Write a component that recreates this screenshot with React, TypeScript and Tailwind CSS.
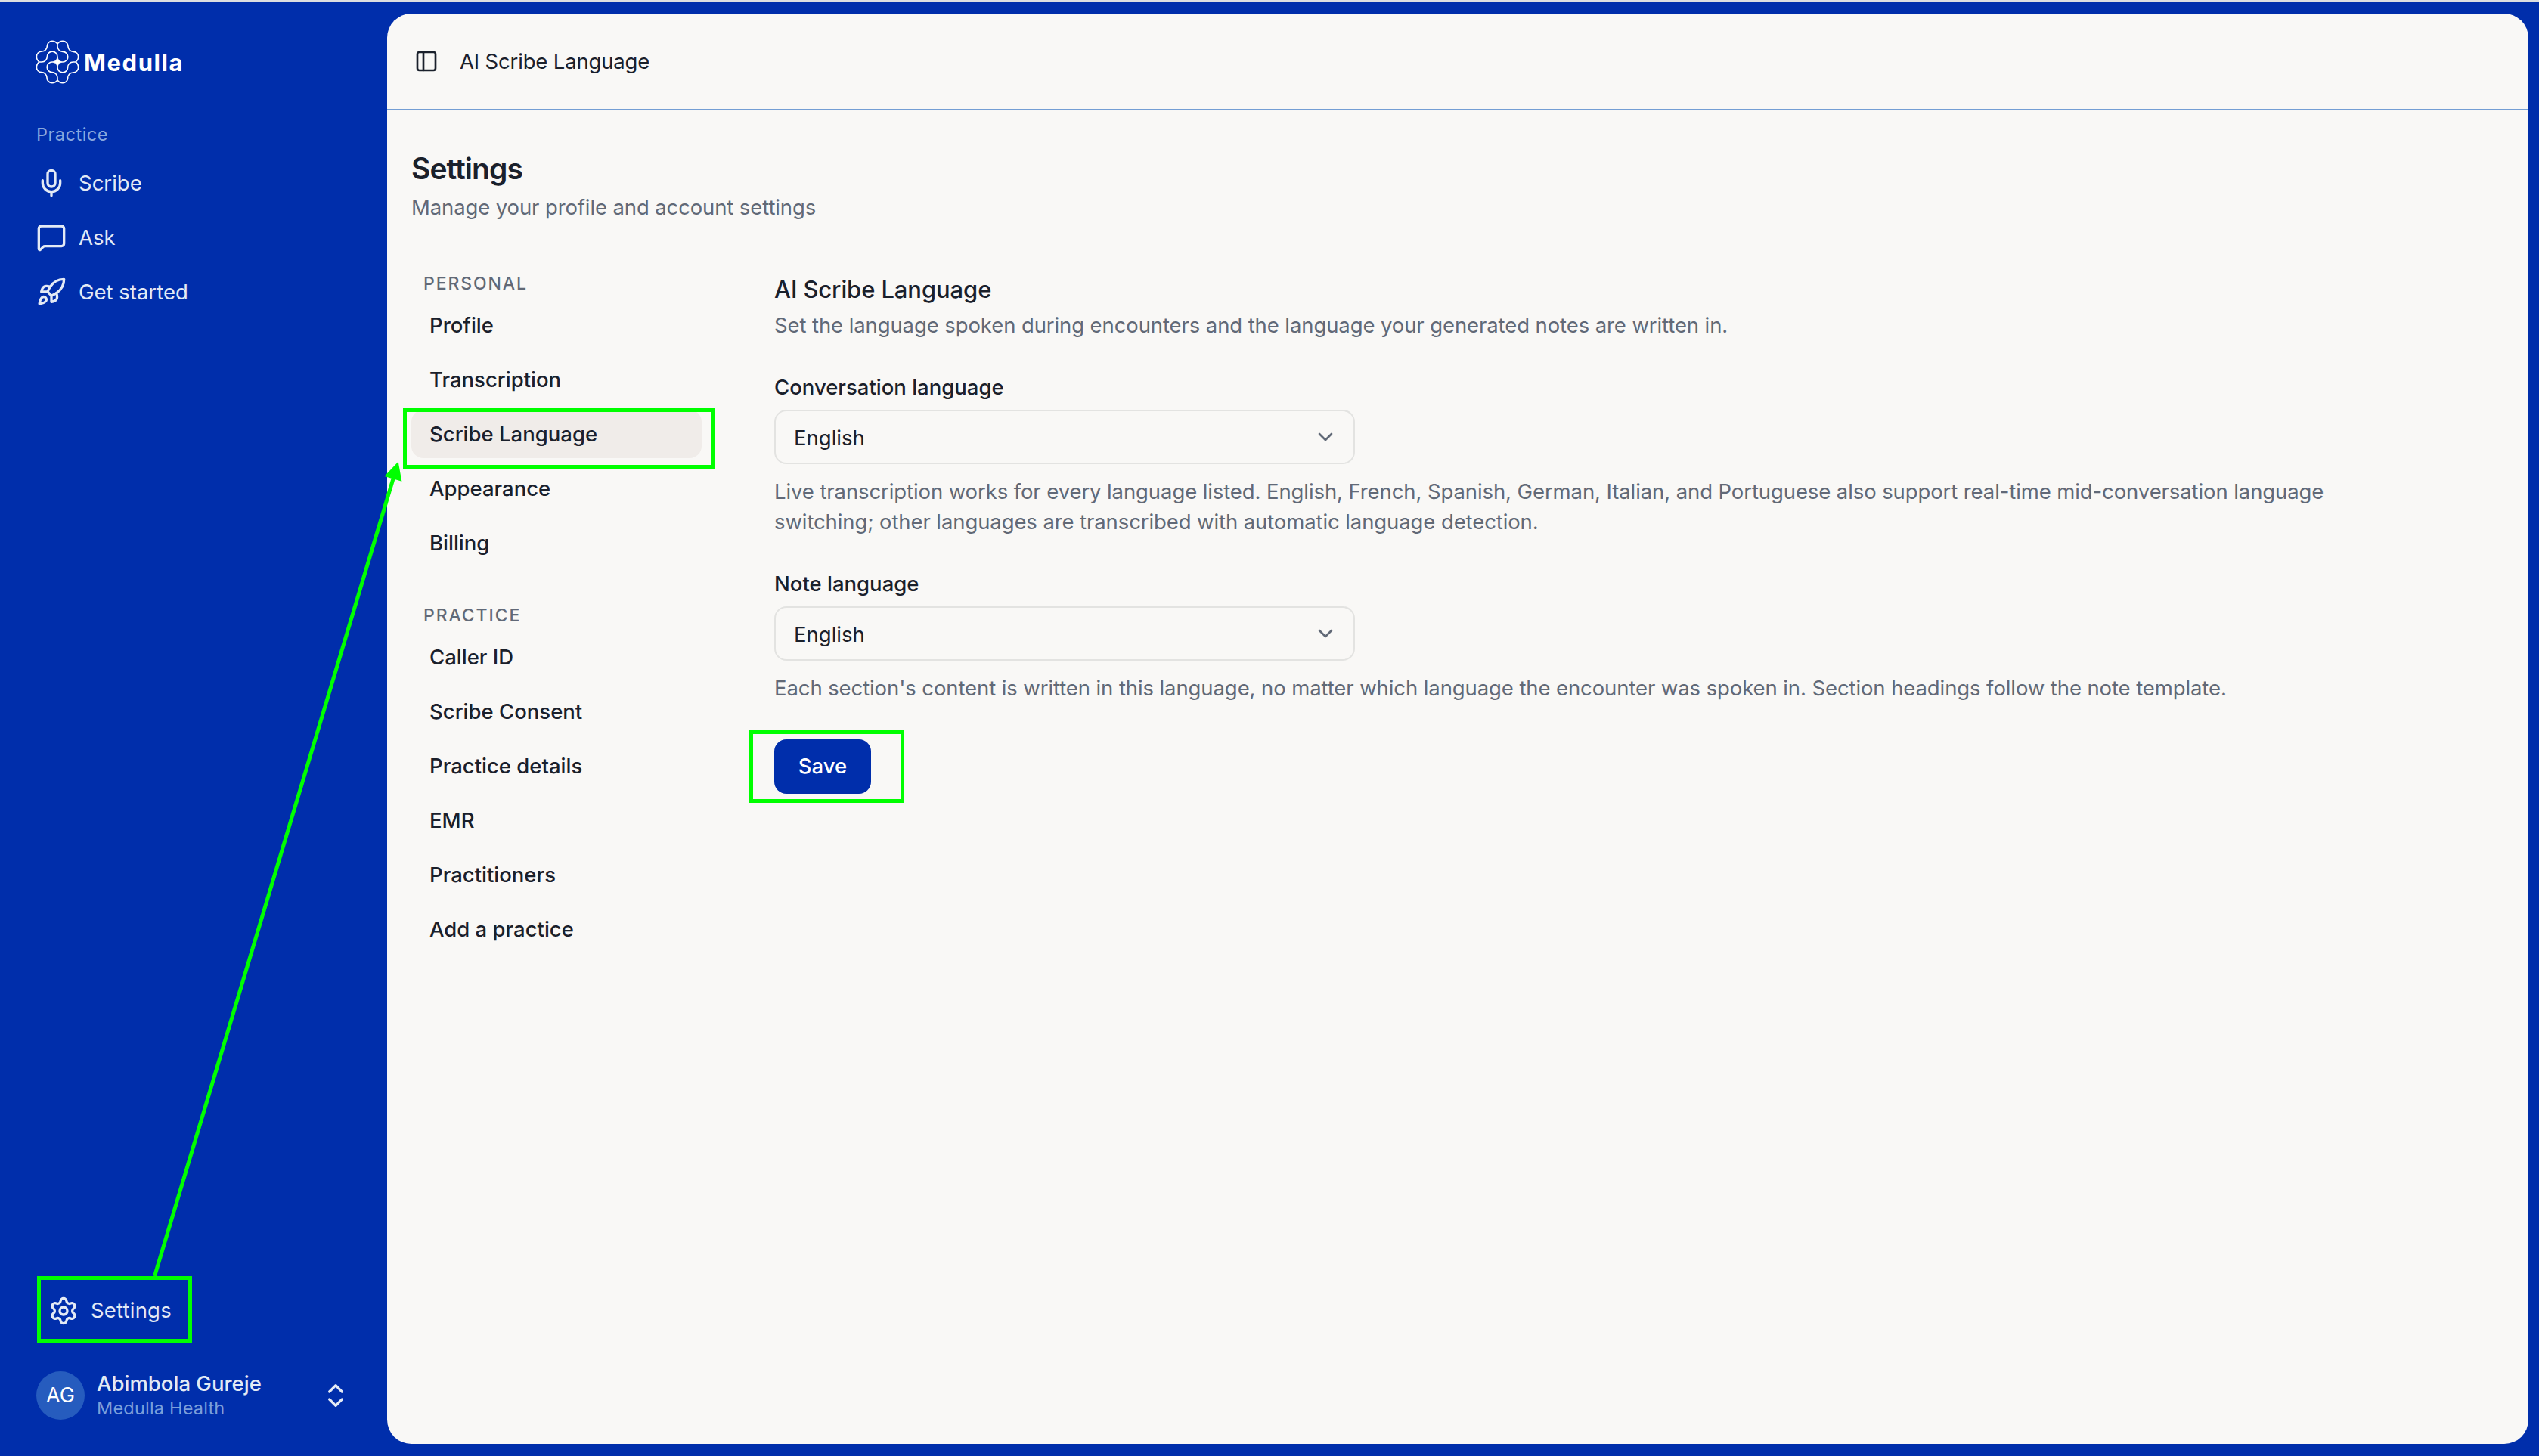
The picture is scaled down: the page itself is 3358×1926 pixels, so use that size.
import { ChevronDown, ChevronsUpDown, MessageSquare, Mic, PanelLeft, Rocket, Settings } from "lucide-react";

const mainNav = [
  { label: "Scribe", icon: Mic },
  { label: "Ask", icon: MessageSquare },
  { label: "Get started", icon: Rocket }
];

const settingsNav = [
  {
    title: "Personal",
    items: ["Profile", "Transcription", "Scribe Language", "Appearance", "Billing"]
  },
  {
    title: "Practice",
    items: ["Caller ID", "Scribe Consent", "Practice details", "EMR", "Practitioners", "Add a practice"]
  }
];

function Logo() {
  // one quarter of the mark, repeated around the centre
  const outer =
    "M24 96C17 91 13 84 13 75C13 63 22 54 34 54A21 21 0 0 0 55 33C55 22 64 13 75 13C84 13 91 17 96 24";
  const inner = "M24 96H34A21 21 0 0 0 55 75A20.5 20.5 0 0 1 96 75V96";
  return (
    <svg viewBox="12 12 168 168" className="size-14 overflow-visible" fill="none" stroke="white" strokeWidth="4.8">
      {[0, 90, 180, 270].map((deg) => (
        <g key={deg} transform={`rotate(${deg} 96 96)`}>
          <path d={outer} />
          <path d={inner} />
        </g>
      ))}
      <path
        d="M96 79Q100 92 113 96Q100 100 96 113Q92 100 79 96Q92 92 96 79Z"
        fill="white"
        strokeWidth="2"
      />
    </svg>
  );
}

function Sidebar() {
  return (
    <aside className="w-[512px] h-full flex flex-col px-12 text-[#e3eaf5]">
      <div className="mt-[52px] h-14 flex items-center gap-[7px]">
        <Logo />
        <span className="text-[31px] leading-none font-bold tracking-[1.6px] text-white">Medulla</span>
      </div>

      <div className="mt-[52px] text-[23.5px] leading-8 tracking-[0.5px] text-[#88a7dd]">Practice</div>
      <nav className="mt-3">
        {mainNav.map(({ label, icon: Icon }) => (
          <a key={label} className="h-[72px] flex items-center gap-4">
            <Icon className="size-10" />
            <span className="pt-0.5">{label}</span>
          </a>
        ))}
      </nav>

      <div className="mt-auto pl-4 h-[72px] flex items-center gap-4">
        <Settings className="size-10" />
        <span className="tracking-[0.2px]">Settings</span>
      </div>
      <div className="mt-10 mb-[44px] h-[72px] flex items-center">
        <div className="size-16 rounded-full bg-[#265cbe] flex items-center justify-center text-[27px] text-white">
          AG
        </div>
        <div className="ml-4 flex-1">
          <div className="leading-[34px] font-medium">Abimbola Gureje</div>
          <div className="text-[23.5px] leading-8 tracking-[0.2px] text-[#7b9fdb]">Medulla Health</div>
        </div>
        <ChevronsUpDown className="size-10" />
      </div>
    </aside>
  );
}

function SettingsNav() {
  return (
    <div className="w-96 shrink-0 flex flex-col gap-12">
      {settingsNav.map((section) => (
        <section key={section.title}>
          <h3 className="px-4 mb-[7px] text-[23px] leading-8 font-medium uppercase tracking-[1.9px] text-[#616977]">
            {section.title}
          </h3>
          <ul className="flex flex-col gap-2">
            {section.items.map((item) => (
              <li
                key={item}
                className={`h-16 px-6 pt-0.5 rounded-2xl flex items-center font-medium ${
                  item === "Scribe Language" ? "bg-[#f0ece9]" : ""
                }`}
              >
                {item}
              </li>
            ))}
          </ul>
        </section>
      ))}
    </div>
  );
}

function LanguageField({ label, help }: { label: string; help: string }) {
  return (
    <div className="mt-[42px]">
      <label className="block leading-10 font-medium">{label}</label>
      <div className="mt-2.5 w-[768px] h-[72px] pl-6 pr-[21px] border-2 border-[#e3e3e1] rounded-2xl flex items-center justify-between">
        <span className="pt-1">English</span>
        <ChevronDown className="size-8 text-[#616977]" />
      </div>
      <p className="mt-4 leading-10 tracking-[-0.1px] text-[#616977]">{help}</p>
    </div>
  );
}

function Annotations() {
  return (
    <>
      <div className="absolute left-[533px] top-[540px] w-[412px] h-20 border-[5px] border-[#00ff00]" />
      <div className="absolute left-[991px] top-[966px] w-[205px] h-24 border-[5px] border-[#00ff00]" />
      <div className="absolute left-[49px] top-[1688px] w-[205px] h-[88px] border-[5px] border-[#00ff00]" />
      <svg className="absolute left-0 top-0 w-[600px] h-[1800px]" viewBox="0 0 600 1800">
        <path d="M204.5 1688L521 630" stroke="#00ff00" strokeWidth="5" fill="none" />
        <path d="M526.7 610.7L531.4 636.8L508.4 629.9Z" fill="#00ff00" />
      </svg>
    </>
  );
}

export default function App() {
  return (
    <div className="relative w-[3358px] h-[1926px] overflow-hidden flex border-t-2 border-[#dcdee0] bg-[#002eab] font-['Inter',sans-serif] text-[27.5px] text-[#1a202b]">
      <Sidebar />

      <main className="flex-1 mt-4 mb-4 mr-3.5 rounded-[32px] bg-[#f9f8f6] overflow-hidden">
        <header className="h-32 pl-9 flex items-center gap-7 border-b-2 border-[#749ed4]">
          <PanelLeft className="size-8" />
          <span className="pt-0.5 tracking-[-0.17px]">AI Scribe Language</span>
        </header>

        <div className="px-8 pt-[49px]">
          <h1 className="text-[39px] leading-[56px] font-semibold tracking-tight">Settings</h1>
          <p className="mt-[3px] leading-10 tracking-[-0.12px] text-[#616977]">
            Manage your profile and account settings
          </p>

          <div className="mt-[65px] flex gap-24">
            <SettingsNav />
            <div className="w-[2120px]">
              <h2 className="text-[31px] leading-[48px] font-medium tracking-[-0.1px]">AI Scribe Language</h2>
              <p className="mt-[3px] leading-10 tracking-[-0.1px] text-[#616977]">
                Set the language spoken during encounters and the language your generated notes are written in.
              </p>
              <LanguageField
                label="Conversation language"
                help="Live transcription works for every language listed. English, French, Spanish, German, Italian, and Portuguese also support real-time mid-conversation language switching; other languages are transcribed with automatic language detection."
              />
              <LanguageField
                label="Note language"
                help="Each section's content is written in this language, no matter which language the encounter was spoken in. Section headings follow the note template."
              />
              <button className="mt-12 h-[72px] w-32 rounded-2xl bg-[#002eab] text-white font-medium">Save</button>
            </div>
          </div>
        </div>
      </main>

      <div className="absolute inset-x-0 -top-0.5 h-[1926px]">
        <Annotations />
      </div>
    </div>
  );
}
